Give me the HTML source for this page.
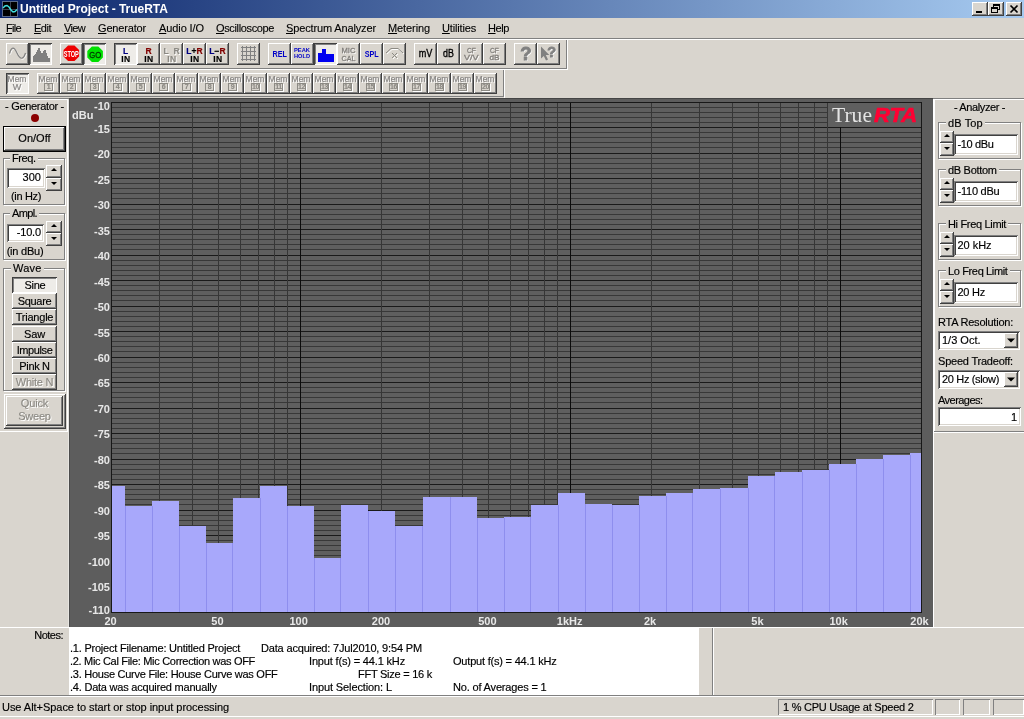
<!DOCTYPE html>
<html><head><meta charset="utf-8"><title>Untitled Project - TrueRTA</title>
<style>
*{box-sizing:border-box;margin:0;padding:0}
html,body{width:1024px;height:719px;overflow:hidden;background:#d9d5ce}
body{position:relative;font-family:"Liberation Sans",sans-serif;font-size:11px;color:#000;line-height:13px;-webkit-text-stroke:0.16px}
.abs{position:absolute}
.t{position:absolute;white-space:nowrap}
#title{position:absolute;left:0;top:0;width:1024px;height:18px;background:linear-gradient(90deg,#0a246a,#a6caf0)}
#title .cap{-webkit-text-stroke:0;position:absolute;left:20px;top:2px;color:#fff;font-weight:bold;font-size:12px;line-height:14px;white-space:nowrap;letter-spacing:0.1px}
.wb{position:absolute;top:2px;width:16px;height:14px;background:#d9d5ce;box-shadow:inset -1px -1px #404040,inset 1px 1px #fff,inset -2px -2px #808080}
#menu{position:absolute;left:0;top:18px;width:1024px;height:20px}
#menu>span{-webkit-text-stroke:0.12px;position:absolute;top:3px;font-size:11px;line-height:14px;white-space:nowrap}
#menu u{text-decoration:underline;text-underline-offset:1px}
.hl{position:absolute;height:1px;left:0;width:1024px}
.tb{position:absolute;width:23px;height:22px;background:#d9d5ce;box-shadow:inset -1px -1px #404040,inset 1px 1px #fff,inset -2px -2px #808080}
.tb.on{background:#eeece8;box-shadow:inset 1px 1px #404040,inset -1px -1px #fff,inset 2px 2px #808080}
.tb svg{position:absolute;left:0;top:0}
.tb .l1,.tb .l2{position:absolute;left:0;width:23px;text-align:center;font-size:8.5px;line-height:8px;font-weight:bold;letter-spacing:0}
.mem{position:absolute;top:73px;width:23px;height:21px;background:#d9d5ce;box-shadow:inset -1px -1px #404040,inset 1px 1px #fff,inset -2px -2px #808080}
.mem i{position:absolute;left:0;top:2px;width:22px;text-align:center;font-style:normal;font-size:8.5px;line-height:8px;color:#848280;text-shadow:1px 1px 0 #fff}
.mem b{position:absolute;left:7px;top:10px;width:9px;height:8px;border:1px solid #8c8a84;font-size:7px;line-height:6px;letter-spacing:-0.5px;text-align:center;color:#8c8a84;font-weight:bold;box-shadow:1px 1px 0 #fff}
.yl{-webkit-text-stroke:0;position:absolute;left:69px;width:41px;text-align:right;font-weight:bold;font-size:11px;line-height:11px;color:#e8e8e8}
.xl{-webkit-text-stroke:0;position:absolute;top:616px;font-weight:bold;font-size:11px;line-height:11px;color:#e8e8e8;white-space:nowrap}
.grp{position:absolute;border:1px solid #808080;box-shadow:1px 1px 0 #fff,inset 1px 1px 0 #fff}
.grp>em{position:absolute;top:-8px;background:#d9d5ce;font-style:normal;padding:0 2px;white-space:nowrap;line-height:13px}
.edit{position:absolute;background:#fff;box-shadow:inset 1px 1px #808080,inset -1px -1px #fff,inset 2px 2px #404040,inset -2px -2px #d9d5ce;white-space:nowrap}
.btn{position:absolute;background:#d9d5ce;box-shadow:inset -1px -1px #404040,inset 1px 1px #fff,inset -2px -2px #808080;text-align:center;white-space:nowrap}
.btn.on{background:#eeece8;box-shadow:inset 1px 1px #404040,inset -1px -1px #fff,inset 2px 2px #808080}
.dis{color:#8c8a84;text-shadow:1px 1px 0 #fff}
.spin{position:absolute;width:15px;background:#d9d5ce}
.spin s{position:absolute;left:0;right:0;background:#d9d5ce;box-shadow:inset -1px -1px #404040,inset 1px 1px #fff,inset -2px -2px #808080}
.spin s:after{content:"";position:absolute;left:50%;margin-left:-3.5px;border:3px solid transparent}
.spin s.u:after{top:0px;border-bottom:3px solid #000;border-top:0 solid transparent;top:3px}
.spin s.d:after{border-top:3px solid #000;border-bottom:0 solid transparent;top:4px}
.sp{position:absolute;background:#d9d5ce;box-shadow:inset 1px 1px #808080,inset -1px -1px #fff}
#w{position:absolute;left:0;top:0;width:1024px;height:719px;will-change:transform}
</style></head><body><div id="w">
<div id="title">
<svg class="abs" style="left:2px;top:1px" width="16" height="16" viewBox="0 0 16 16" shape-rendering="crispEdges"><rect x="0" y="0" width="16" height="16" fill="#5a6a8a"/><rect x="1" y="1" width="14" height="14" fill="#000"/><path d="M8.5 1V15M1 8.5H15" stroke="#3a4252" stroke-width="1" fill="none"/><path d="M1 7 L3 5 L5 4.5 L7 6 L9 9 L11 11 L13 10.5 L15 8.5" stroke="#3fe0e0" stroke-width="1.4" fill="none" shape-rendering="auto"/></svg>
<div class="cap"><span style="letter-spacing:-0.02px">Untitled Project - TrueRTA</span></div>
<div class="wb" style="left:972px"><svg width="16" height="14"><rect x="4" y="9" width="6" height="2" fill="#000"/></svg></div>
<div class="wb" style="left:988px"><svg width="16" height="14" shape-rendering="crispEdges"><rect x="5.5" y="2.5" width="6" height="5" fill="none" stroke="#000"/><rect x="5" y="2" width="7" height="2" fill="#000"/><rect x="3.5" y="5.5" width="6" height="5" fill="#d9d5ce" stroke="#000"/><rect x="3" y="5" width="7" height="2" fill="#000"/></svg></div>
<div class="wb" style="left:1006px"><svg width="16" height="14"><path d="M4.5 3.5 L11.5 10.5 M11.5 3.5 L4.5 10.5" stroke="#000" stroke-width="1.7"/></svg></div>
</div>
<div id="menu">
<span style="left:6px"><span style="letter-spacing:-0.68px"><u>F</u>ile</span></span>
<span style="left:34px"><span style="letter-spacing:-0.49px"><u>E</u>dit</span></span>
<span style="left:64px"><span style="letter-spacing:-0.66px"><u>V</u>iew</span></span>
<span style="left:98px"><span style="letter-spacing:-0.17px"><u>G</u>enerator</span></span>
<span style="left:159px"><span style="letter-spacing:-0.10px"><u>A</u>udio I/O</span></span>
<span style="left:216px"><span style="letter-spacing:-0.36px"><u>O</u>scilloscope</span></span>
<span style="left:286px"><span style="letter-spacing:-0.14px"><u>S</u>pectrum Analyzer</span></span>
<span style="left:388px"><span style="letter-spacing:-0.10px"><u>M</u>etering</span></span>
<span style="left:442px"><span style="letter-spacing:-0.16px"><u>U</u>tilities</span></span>
<span style="left:488px"><span style="letter-spacing:-0.41px"><u>H</u>elp</span></span>
</div>
<div class="hl" style="top:38px;background:#808080"></div><div class="hl" style="top:39px;background:#fff"></div>
<div class="abs" style="left:0;top:40px;width:567px;height:29px;box-shadow:inset -1px -1px #808080"></div><div class="abs" style="left:567px;top:40px;width:1px;height:30px;background:#fff"></div>
<div class="abs" style="left:0;top:69px;width:567px;height:1px;background:#fff"></div>
<div class="abs" style="left:0;top:70px;width:504px;height:27px;box-shadow:inset -1px -1px #808080"></div><div class="abs" style="left:504px;top:70px;width:1px;height:28px;background:#fff"></div>
<div class="abs" style="left:0;top:98px;width:1024px;height:1px;background:#808080"></div><div class="abs" style="left:0;top:99px;width:68px;height:1px;background:#fff"></div><div class="abs" style="left:933px;top:99px;width:91px;height:1px;background:#fff"></div>
<div class="tb" style="left:6px;top:43px"><svg width="23" height="22"><path d="M3.5 10.5 C5.5 3.5 8 3.5 11 10 S17 17.5 19.5 10" fill="none" stroke="#fff" stroke-width="1" transform="translate(1,1)"/><path d="M3.5 10.5 C5.5 3.5 8 3.5 11 10 S17 17.5 19.5 10" fill="none" stroke="#808080" stroke-width="1.2"/></svg></div>
<div class="tb on" style="left:29px;top:43px"><svg width="23" height="22" shape-rendering="crispEdges"><path d="M4 19 V13 H5 V12 H6 V11 H7 V9 H8 V7 H9 V5 H10 V5 H11 V8 H12 V10 H13 V10 H14 V8 H15 V7 H16 V7 H17 V10 H18 V13 H19 V15 H20 V15 H21 V19 Z" fill="#808080"/></svg></div>
<div class="tb" style="left:60px;top:43px"><svg width="23" height="22"><polygon points="8.1,2.5 14.5,2.5 19.1,7.1 19.1,13.5 14.5,18.1 8.1,18.1 3.5,13.5 3.5,7.1" fill="#ee0000"/><text x="3.8" y="13.6" font-family="Liberation Sans" font-size="9" font-weight="bold" fill="#fff" textLength="15" lengthAdjust="spacingAndGlyphs">STOP</text></svg></div>
<div class="tb on" style="left:83px;top:43px"><svg width="23" height="22"><polygon points="8.9,3.4 15.3,3.4 19.9,8.0 19.9,14.4 15.3,19.0 8.9,19.0 4.3,14.4 4.3,8.0" fill="#00e000"/><text x="6.2" y="14.6" font-family="Liberation Sans" font-size="9.5" fill="#003800" stroke="#003800" stroke-width="0.3" textLength="12" lengthAdjust="spacingAndGlyphs">GO</text></svg></div>
<div class="tb on" style="left:114px;top:43px"><div class="l1" style="top:4px;color:#000080">L</div><div class="l2" style="top:12px;color:#000;letter-spacing:0.6px;padding-left:1px">IN</div></div>
<div class="tb" style="left:137px;top:43px"><div class="l1" style="top:4px;color:#800000">R</div><div class="l2" style="top:12px;color:#000;letter-spacing:0.6px;padding-left:1px">IN</div></div>
<div class="tb" style="left:160px;top:43px"><div class="l1" style="top:4px;color:#8c8a84;text-shadow:1px 1px 0 #fff">L&nbsp;&nbsp;R</div><div class="l2" style="top:12px;color:#8c8a84;text-shadow:1px 1px 0 #fff;letter-spacing:0.6px;padding-left:1px">IN</div></div>
<div class="tb" style="left:183px;top:43px"><div class="l1" style="top:4px;color:#000"><span style="color:#000080">L</span><span style="color:#000">+</span><span style="color:#800000">R</span></div><div class="l2" style="top:12px;color:#000;letter-spacing:0.6px;padding-left:1px">IN</div></div>
<div class="tb" style="left:206px;top:43px"><div class="l1" style="top:4px;color:#000"><span style="color:#000080">L</span><span style="color:#000">&minus;</span><span style="color:#800000">R</span></div><div class="l2" style="top:12px;color:#000;letter-spacing:0.6px;padding-left:1px">IN</div></div>
<div class="tb" style="left:237px;top:43px"><svg width="23" height="22" shape-rendering="crispEdges"><path d="M5.5 3V18 M9.5 3V18 M13.5 3V18 M17.5 3V18 M4 4.5H19 M4 8.5H19 M4 12.5H19 M4 16.5H19" stroke="#808080" fill="none"/></svg></div>
<div class="tb" style="left:268px;top:43px"><svg width="23" height="22"><text x="4.5" y="14.2" font-family="Liberation Sans" font-weight="bold" font-size="8.5" fill="#0000c8" textLength="14.5" lengthAdjust="spacingAndGlyphs">REL</text></svg></div>
<div class="tb" style="left:291px;top:43px"><svg width="23" height="22"><text x="3" y="9.3" font-family="Liberation Sans" font-weight="bold" font-size="6.2" fill="#0000c8" textLength="16" lengthAdjust="spacingAndGlyphs">PEAK</text><text x="3" y="15.2" font-family="Liberation Sans" font-weight="bold" font-size="6.2" fill="#0000c8" textLength="16" lengthAdjust="spacingAndGlyphs">HOLD</text></svg></div>
<div class="tb on" style="left:314px;top:43px"><svg width="23" height="22" shape-rendering="crispEdges"><path d="M4 19 V10 H8 V6 H12 V11 H20 V19 Z" fill="#0000f0"/></svg></div>
<div class="tb" style="left:337px;top:43px"><svg width="23" height="22"><g font-family="Liberation Sans" font-size="8"><text x="5.5" y="11" fill="#fff" textLength="14" lengthAdjust="spacingAndGlyphs">MIC</text><text x="5.5" y="19" fill="#fff" textLength="14" lengthAdjust="spacingAndGlyphs">CAL</text><text x="4.5" y="10" fill="#807e7a" stroke="#807e7a" stroke-width="0.3" textLength="14" lengthAdjust="spacingAndGlyphs">MIC</text><text x="4.5" y="18" fill="#807e7a" stroke="#807e7a" stroke-width="0.3" textLength="14" lengthAdjust="spacingAndGlyphs">CAL</text></g></svg></div>
<div class="tb" style="left:360px;top:43px"><svg width="23" height="22"><text x="4.7" y="14.2" font-family="Liberation Sans" font-weight="bold" font-size="8.5" fill="#0000c8" textLength="14" lengthAdjust="spacingAndGlyphs">SPL</text></svg></div>
<div class="tb" style="left:383px;top:43px"><svg width="23" height="22"><path d="M3 10 L8 5.5 H15 L20 10" fill="none" stroke="#fff" transform="translate(1,1)"/><path d="M3 10 L8 5.5 H15 L20 10" fill="none" stroke="#8c8a84"/><path d="M9 10 L14 15 M14 10 L9 15" stroke="#fff" transform="translate(1,1)"/><path d="M9 10 L14 15 M14 10 L9 15" stroke="#8c8a84"/></svg></div>
<div class="tb" style="left:414px;top:43px"><svg width="23" height="22"><text x="4.8" y="13.8" font-family="Liberation Sans" font-size="10.5" fill="#000" stroke="#000" stroke-width="0.35" textLength="13.6" lengthAdjust="spacingAndGlyphs">mV</text></svg></div>
<div class="tb" style="left:437px;top:43px"><svg width="23" height="22"><text x="6" y="13.8" font-family="Liberation Sans" font-size="10.5" fill="#000" stroke="#000" stroke-width="0.35" textLength="10.8" lengthAdjust="spacingAndGlyphs">dB</text></svg></div>
<div class="tb" style="left:460px;top:43px"><svg width="23" height="22"><g font-family="Liberation Sans" font-size="8"><text x="8" y="10.8" fill="#fff" textLength="9" lengthAdjust="spacingAndGlyphs">CF</text><text x="5" y="18" fill="#fff" textLength="14.5" lengthAdjust="spacingAndGlyphs">V/V</text><text x="7" y="9.8" fill="#807e7a" stroke="#807e7a" stroke-width="0.3" textLength="9" lengthAdjust="spacingAndGlyphs">CF</text><text x="4" y="17" fill="#807e7a" stroke="#807e7a" stroke-width="0.3" textLength="14.5" lengthAdjust="spacingAndGlyphs">V/V</text></g></svg></div>
<div class="tb" style="left:483px;top:43px"><svg width="23" height="22"><g font-family="Liberation Sans" font-size="8"><text x="8" y="10.8" fill="#fff" textLength="9" lengthAdjust="spacingAndGlyphs">CF</text><text x="7.5" y="18" fill="#fff" textLength="10" lengthAdjust="spacingAndGlyphs">dB</text><text x="7" y="9.8" fill="#807e7a" stroke="#807e7a" stroke-width="0.3" textLength="9" lengthAdjust="spacingAndGlyphs">CF</text><text x="6.5" y="17" fill="#807e7a" stroke="#807e7a" stroke-width="0.3" textLength="10" lengthAdjust="spacingAndGlyphs">dB</text></g></svg></div>
<div class="tb" style="left:514px;top:43px"><svg width="23" height="22"><text x="7.2" y="18" font-family="Liberation Sans" font-weight="bold" font-size="18.5" fill="#fff">?</text><text x="6.2" y="17" font-family="Liberation Sans" font-weight="bold" font-size="18.5" fill="#808080" stroke="#808080" stroke-width="0.9">?</text></svg></div>
<div class="tb" style="left:537px;top:43px"><svg width="23" height="22"><path d="M4 3.5 V15.5 L6.8 13 L9 17.5 L11 16.5 L8.8 12 H12.3 Z" fill="#808080"/><text x="11.3" y="15.2" font-family="Liberation Sans" font-weight="bold" font-size="14.5" fill="#fff">?</text><text x="10.3" y="14.2" font-family="Liberation Sans" font-weight="bold" font-size="14.5" fill="#808080" stroke="#808080" stroke-width="0.8">?</text></svg></div>
<div class="mem" style="left:6px;background:#eeece8;box-shadow:inset 1px 1px #404040,inset -1px -1px #fff,inset 2px 2px #808080"><i>Mem</i><i style="top:10px;font-size:9px">W</i></div>
<div class="mem" style="left:37px"><i>Mem</i><b>1</b></div>
<div class="mem" style="left:60px"><i>Mem</i><b>2</b></div>
<div class="mem" style="left:83px"><i>Mem</i><b>3</b></div>
<div class="mem" style="left:106px"><i>Mem</i><b>4</b></div>
<div class="mem" style="left:129px"><i>Mem</i><b>5</b></div>
<div class="mem" style="left:152px"><i>Mem</i><b>6</b></div>
<div class="mem" style="left:175px"><i>Mem</i><b>7</b></div>
<div class="mem" style="left:198px"><i>Mem</i><b>8</b></div>
<div class="mem" style="left:221px"><i>Mem</i><b>9</b></div>
<div class="mem" style="left:244px"><i>Mem</i><b>10</b></div>
<div class="mem" style="left:267px"><i>Mem</i><b>11</b></div>
<div class="mem" style="left:290px"><i>Mem</i><b>12</b></div>
<div class="mem" style="left:313px"><i>Mem</i><b>13</b></div>
<div class="mem" style="left:336px"><i>Mem</i><b>14</b></div>
<div class="mem" style="left:359px"><i>Mem</i><b>15</b></div>
<div class="mem" style="left:382px"><i>Mem</i><b>16</b></div>
<div class="mem" style="left:405px"><i>Mem</i><b>17</b></div>
<div class="mem" style="left:428px"><i>Mem</i><b>18</b></div>
<div class="mem" style="left:451px"><i>Mem</i><b>19</b></div>
<div class="mem" style="left:474px"><i>Mem</i><b>20</b></div>
<div class="abs" style="left:67px;top:99px;width:1px;height:333px;background:#fff"></div><div class="abs" style="left:0;top:431px;width:68px;height:1px;background:#fff"></div>
<div class="t" style="left:0;width:69px;text-align:center;top:100px"><span style="letter-spacing:-0.31px">- Generator -</span></div>
<div class="abs" style="left:31px;top:114px;width:8px;height:8px;border-radius:4px;background:#8b0000"></div>
<div class="btn" style="left:3px;top:126px;width:63px;height:26px;border:1px solid #000;line-height:23px;"><span style="letter-spacing:0.03px">On/Off</span></div>
<div class="grp" style="left:3px;top:158px;width:62px;height:47px"><em style="left:6px;top:-7px"><span style="letter-spacing:-0.40px">Freq.</span></em></div>
<div class="edit" style="left:7px;top:168px;width:38px;height:20px;text-align:right;padding:3px 4px 0 0"><span style="letter-spacing:0.05px">300</span></div>
<div class="spin" style="left:46px;top:165px;height:26px;width:16px"><s class="u" style="top:0;height:13px"></s><s class="d" style="top:13px;height:13px"></s></div>
<div class="t" style="left:2px;width:48px;text-align:center;top:189.5px"><span style="letter-spacing:-0.34px">(in Hz)</span></div>
<div class="grp" style="left:3px;top:213px;width:62px;height:47px"><em style="left:6px;top:-7px"><span style="letter-spacing:-0.62px">Ampl.</span></em></div>
<div class="edit" style="left:7px;top:224px;width:37px;height:18px;text-align:right;padding:2px 3px 0 0"><span style="letter-spacing:-0.14px">-10.0</span></div>
<div class="spin" style="left:46px;top:221px;height:25px;width:16px"><s class="u" style="top:0;height:12px"></s><s class="d" style="top:12px;height:13px"></s></div>
<div class="t" style="left:2px;width:46px;text-align:center;top:244.5px"><span style="letter-spacing:-0.23px">(in dBu)</span></div>
<div class="grp" style="left:3px;top:268px;width:62px;height:123px"><em style="left:7px;top:-7px"><span style="letter-spacing:0.26px">Wave</span></em></div>
<div class="btn on" style="left:12px;top:277px;width:45px;height:16px;line-height:17px;padding-left:1px"><span style="letter-spacing:-0.26px">Sine</span></div>
<div class="btn" style="left:12px;top:293px;width:45px;height:16px;line-height:16px"><span style="letter-spacing:-0.29px">Square</span></div>
<div class="btn" style="left:12px;top:309px;width:45px;height:16px;line-height:16px"><span style="letter-spacing:-0.23px">Triangle</span></div>
<div class="btn" style="left:12px;top:326px;width:45px;height:16px;line-height:16px"><span style="letter-spacing:-0.14px">Saw</span></div>
<div class="btn" style="left:12px;top:342px;width:45px;height:16px;line-height:16px"><span style="letter-spacing:-0.40px">Impulse</span></div>
<div class="btn" style="left:12px;top:358px;width:45px;height:16px;line-height:16px"><span style="letter-spacing:-0.32px">Pink N</span></div>
<div class="btn dis" style="left:12px;top:374px;width:45px;height:16px;line-height:16px"><span style="letter-spacing:-0.23px">White N</span></div>
<div class="btn" style="left:4px;top:394px;width:62px;height:35px"></div><div class="btn dis" style="left:6px;top:396px;width:57px;height:30px;padding-top:1px;line-height:13px"><span style="letter-spacing:-0.12px">Quick</span><br><span style="letter-spacing:-0.23px">Sweep</span></div>

<div class="abs" style="left:68px;top:100px;width:1px;height:528px;background:#e6e4e0"></div><svg class="chart" width="864" height="529" viewBox="69 98 864 529" style="position:absolute;left:69px;top:98px" shape-rendering="crispEdges">
<rect x="69" y="98" width="864" height="529" fill="#5d5d5d"/>
<rect x="69" y="98" width="864" height="1" fill="#444444"/><rect x="69" y="98" width="1" height="529" fill="#4c4c4c"/>
<rect x="111" y="102" width="811" height="511" fill="#5f5f5f"/>
<line x1="111" x2="921" y1="102.5" y2="102.5" stroke="#1a1a1a" stroke-width="1"/>
<line x1="111" x2="921" y1="107.5" y2="107.5" stroke="#383838" stroke-width="1"/>
<line x1="111" x2="921" y1="112.5" y2="112.5" stroke="#383838" stroke-width="1"/>
<line x1="111" x2="921" y1="117.5" y2="117.5" stroke="#383838" stroke-width="1"/>
<line x1="111" x2="921" y1="122.5" y2="122.5" stroke="#383838" stroke-width="1"/>
<line x1="111" x2="921" y1="127.5" y2="127.5" stroke="#1a1a1a" stroke-width="1"/>
<line x1="111" x2="921" y1="132.5" y2="132.5" stroke="#383838" stroke-width="1"/>
<line x1="111" x2="921" y1="137.5" y2="137.5" stroke="#383838" stroke-width="1"/>
<line x1="111" x2="921" y1="142.5" y2="142.5" stroke="#383838" stroke-width="1"/>
<line x1="111" x2="921" y1="147.5" y2="147.5" stroke="#383838" stroke-width="1"/>
<line x1="111" x2="921" y1="153.5" y2="153.5" stroke="#1a1a1a" stroke-width="1"/>
<line x1="111" x2="921" y1="158.5" y2="158.5" stroke="#383838" stroke-width="1"/>
<line x1="111" x2="921" y1="163.5" y2="163.5" stroke="#383838" stroke-width="1"/>
<line x1="111" x2="921" y1="168.5" y2="168.5" stroke="#383838" stroke-width="1"/>
<line x1="111" x2="921" y1="173.5" y2="173.5" stroke="#383838" stroke-width="1"/>
<line x1="111" x2="921" y1="178.5" y2="178.5" stroke="#1a1a1a" stroke-width="1"/>
<line x1="111" x2="921" y1="183.5" y2="183.5" stroke="#383838" stroke-width="1"/>
<line x1="111" x2="921" y1="188.5" y2="188.5" stroke="#383838" stroke-width="1"/>
<line x1="111" x2="921" y1="193.5" y2="193.5" stroke="#383838" stroke-width="1"/>
<line x1="111" x2="921" y1="198.5" y2="198.5" stroke="#383838" stroke-width="1"/>
<line x1="111" x2="921" y1="204.5" y2="204.5" stroke="#1a1a1a" stroke-width="1"/>
<line x1="111" x2="921" y1="209.5" y2="209.5" stroke="#383838" stroke-width="1"/>
<line x1="111" x2="921" y1="214.5" y2="214.5" stroke="#383838" stroke-width="1"/>
<line x1="111" x2="921" y1="219.5" y2="219.5" stroke="#383838" stroke-width="1"/>
<line x1="111" x2="921" y1="224.5" y2="224.5" stroke="#383838" stroke-width="1"/>
<line x1="111" x2="921" y1="229.5" y2="229.5" stroke="#1a1a1a" stroke-width="1"/>
<line x1="111" x2="921" y1="234.5" y2="234.5" stroke="#383838" stroke-width="1"/>
<line x1="111" x2="921" y1="239.5" y2="239.5" stroke="#383838" stroke-width="1"/>
<line x1="111" x2="921" y1="244.5" y2="244.5" stroke="#383838" stroke-width="1"/>
<line x1="111" x2="921" y1="249.5" y2="249.5" stroke="#383838" stroke-width="1"/>
<line x1="111" x2="921" y1="255.5" y2="255.5" stroke="#1a1a1a" stroke-width="1"/>
<line x1="111" x2="921" y1="260.5" y2="260.5" stroke="#383838" stroke-width="1"/>
<line x1="111" x2="921" y1="265.5" y2="265.5" stroke="#383838" stroke-width="1"/>
<line x1="111" x2="921" y1="270.5" y2="270.5" stroke="#383838" stroke-width="1"/>
<line x1="111" x2="921" y1="275.5" y2="275.5" stroke="#383838" stroke-width="1"/>
<line x1="111" x2="921" y1="280.5" y2="280.5" stroke="#1a1a1a" stroke-width="1"/>
<line x1="111" x2="921" y1="285.5" y2="285.5" stroke="#383838" stroke-width="1"/>
<line x1="111" x2="921" y1="290.5" y2="290.5" stroke="#383838" stroke-width="1"/>
<line x1="111" x2="921" y1="295.5" y2="295.5" stroke="#383838" stroke-width="1"/>
<line x1="111" x2="921" y1="300.5" y2="300.5" stroke="#383838" stroke-width="1"/>
<line x1="111" x2="921" y1="306.5" y2="306.5" stroke="#1a1a1a" stroke-width="1"/>
<line x1="111" x2="921" y1="311.5" y2="311.5" stroke="#383838" stroke-width="1"/>
<line x1="111" x2="921" y1="316.5" y2="316.5" stroke="#383838" stroke-width="1"/>
<line x1="111" x2="921" y1="321.5" y2="321.5" stroke="#383838" stroke-width="1"/>
<line x1="111" x2="921" y1="326.5" y2="326.5" stroke="#383838" stroke-width="1"/>
<line x1="111" x2="921" y1="331.5" y2="331.5" stroke="#1a1a1a" stroke-width="1"/>
<line x1="111" x2="921" y1="336.5" y2="336.5" stroke="#383838" stroke-width="1"/>
<line x1="111" x2="921" y1="341.5" y2="341.5" stroke="#383838" stroke-width="1"/>
<line x1="111" x2="921" y1="346.5" y2="346.5" stroke="#383838" stroke-width="1"/>
<line x1="111" x2="921" y1="351.5" y2="351.5" stroke="#383838" stroke-width="1"/>
<line x1="111" x2="921" y1="357.5" y2="357.5" stroke="#1a1a1a" stroke-width="1"/>
<line x1="111" x2="921" y1="362.5" y2="362.5" stroke="#383838" stroke-width="1"/>
<line x1="111" x2="921" y1="367.5" y2="367.5" stroke="#383838" stroke-width="1"/>
<line x1="111" x2="921" y1="372.5" y2="372.5" stroke="#383838" stroke-width="1"/>
<line x1="111" x2="921" y1="377.5" y2="377.5" stroke="#383838" stroke-width="1"/>
<line x1="111" x2="921" y1="382.5" y2="382.5" stroke="#1a1a1a" stroke-width="1"/>
<line x1="111" x2="921" y1="387.5" y2="387.5" stroke="#383838" stroke-width="1"/>
<line x1="111" x2="921" y1="392.5" y2="392.5" stroke="#383838" stroke-width="1"/>
<line x1="111" x2="921" y1="397.5" y2="397.5" stroke="#383838" stroke-width="1"/>
<line x1="111" x2="921" y1="402.5" y2="402.5" stroke="#383838" stroke-width="1"/>
<line x1="111" x2="921" y1="408.5" y2="408.5" stroke="#1a1a1a" stroke-width="1"/>
<line x1="111" x2="921" y1="413.5" y2="413.5" stroke="#383838" stroke-width="1"/>
<line x1="111" x2="921" y1="418.5" y2="418.5" stroke="#383838" stroke-width="1"/>
<line x1="111" x2="921" y1="423.5" y2="423.5" stroke="#383838" stroke-width="1"/>
<line x1="111" x2="921" y1="428.5" y2="428.5" stroke="#383838" stroke-width="1"/>
<line x1="111" x2="921" y1="433.5" y2="433.5" stroke="#1a1a1a" stroke-width="1"/>
<line x1="111" x2="921" y1="438.5" y2="438.5" stroke="#383838" stroke-width="1"/>
<line x1="111" x2="921" y1="443.5" y2="443.5" stroke="#383838" stroke-width="1"/>
<line x1="111" x2="921" y1="448.5" y2="448.5" stroke="#383838" stroke-width="1"/>
<line x1="111" x2="921" y1="453.5" y2="453.5" stroke="#383838" stroke-width="1"/>
<line x1="111" x2="921" y1="459.5" y2="459.5" stroke="#1a1a1a" stroke-width="1"/>
<line x1="111" x2="921" y1="464.5" y2="464.5" stroke="#383838" stroke-width="1"/>
<line x1="111" x2="921" y1="469.5" y2="469.5" stroke="#383838" stroke-width="1"/>
<line x1="111" x2="921" y1="474.5" y2="474.5" stroke="#383838" stroke-width="1"/>
<line x1="111" x2="921" y1="479.5" y2="479.5" stroke="#383838" stroke-width="1"/>
<line x1="111" x2="921" y1="484.5" y2="484.5" stroke="#1a1a1a" stroke-width="1"/>
<line x1="111" x2="921" y1="489.5" y2="489.5" stroke="#383838" stroke-width="1"/>
<line x1="111" x2="921" y1="494.5" y2="494.5" stroke="#383838" stroke-width="1"/>
<line x1="111" x2="921" y1="499.5" y2="499.5" stroke="#383838" stroke-width="1"/>
<line x1="111" x2="921" y1="504.5" y2="504.5" stroke="#383838" stroke-width="1"/>
<line x1="111" x2="921" y1="510.5" y2="510.5" stroke="#1a1a1a" stroke-width="1"/>
<line x1="111" x2="921" y1="515.5" y2="515.5" stroke="#383838" stroke-width="1"/>
<line x1="111" x2="921" y1="520.5" y2="520.5" stroke="#383838" stroke-width="1"/>
<line x1="111" x2="921" y1="525.5" y2="525.5" stroke="#383838" stroke-width="1"/>
<line x1="111" x2="921" y1="530.5" y2="530.5" stroke="#383838" stroke-width="1"/>
<line x1="111" x2="921" y1="535.5" y2="535.5" stroke="#1a1a1a" stroke-width="1"/>
<line x1="111" x2="921" y1="540.5" y2="540.5" stroke="#383838" stroke-width="1"/>
<line x1="111" x2="921" y1="545.5" y2="545.5" stroke="#383838" stroke-width="1"/>
<line x1="111" x2="921" y1="550.5" y2="550.5" stroke="#383838" stroke-width="1"/>
<line x1="111" x2="921" y1="555.5" y2="555.5" stroke="#383838" stroke-width="1"/>
<line x1="111" x2="921" y1="561.5" y2="561.5" stroke="#1a1a1a" stroke-width="1"/>
<line x1="111" x2="921" y1="566.5" y2="566.5" stroke="#383838" stroke-width="1"/>
<line x1="111" x2="921" y1="571.5" y2="571.5" stroke="#383838" stroke-width="1"/>
<line x1="111" x2="921" y1="576.5" y2="576.5" stroke="#383838" stroke-width="1"/>
<line x1="111" x2="921" y1="581.5" y2="581.5" stroke="#383838" stroke-width="1"/>
<line x1="111" x2="921" y1="586.5" y2="586.5" stroke="#1a1a1a" stroke-width="1"/>
<line x1="111" x2="921" y1="591.5" y2="591.5" stroke="#383838" stroke-width="1"/>
<line x1="111" x2="921" y1="596.5" y2="596.5" stroke="#383838" stroke-width="1"/>
<line x1="111" x2="921" y1="601.5" y2="601.5" stroke="#383838" stroke-width="1"/>
<line x1="111" x2="921" y1="606.5" y2="606.5" stroke="#383838" stroke-width="1"/>
<line x1="111" x2="921" y1="612.5" y2="612.5" stroke="#1a1a1a" stroke-width="1"/>
<line x1="111.5" x2="111.5" y1="102" y2="612" stroke="#363636" stroke-width="1"/>
<line x1="159.5" x2="159.5" y1="102" y2="612" stroke="#363636" stroke-width="1"/>
<line x1="192.5" x2="192.5" y1="102" y2="612" stroke="#363636" stroke-width="1"/>
<line x1="218.5" x2="218.5" y1="102" y2="612" stroke="#363636" stroke-width="1"/>
<line x1="240.5" x2="240.5" y1="102" y2="612" stroke="#363636" stroke-width="1"/>
<line x1="258.5" x2="258.5" y1="102" y2="612" stroke="#363636" stroke-width="1"/>
<line x1="274.5" x2="274.5" y1="102" y2="612" stroke="#363636" stroke-width="1"/>
<line x1="287.5" x2="287.5" y1="102" y2="612" stroke="#363636" stroke-width="1"/>
<line x1="300.5" x2="300.5" y1="102" y2="612" stroke="#0c0c0c" stroke-width="1"/>
<line x1="381.5" x2="381.5" y1="102" y2="612" stroke="#363636" stroke-width="1"/>
<line x1="429.5" x2="429.5" y1="102" y2="612" stroke="#363636" stroke-width="1"/>
<line x1="462.5" x2="462.5" y1="102" y2="612" stroke="#363636" stroke-width="1"/>
<line x1="488.5" x2="488.5" y1="102" y2="612" stroke="#363636" stroke-width="1"/>
<line x1="510.5" x2="510.5" y1="102" y2="612" stroke="#363636" stroke-width="1"/>
<line x1="528.5" x2="528.5" y1="102" y2="612" stroke="#363636" stroke-width="1"/>
<line x1="544.5" x2="544.5" y1="102" y2="612" stroke="#363636" stroke-width="1"/>
<line x1="557.5" x2="557.5" y1="102" y2="612" stroke="#363636" stroke-width="1"/>
<line x1="570.5" x2="570.5" y1="102" y2="612" stroke="#0c0c0c" stroke-width="1"/>
<line x1="651.5" x2="651.5" y1="102" y2="612" stroke="#363636" stroke-width="1"/>
<line x1="699.5" x2="699.5" y1="102" y2="612" stroke="#363636" stroke-width="1"/>
<line x1="732.5" x2="732.5" y1="102" y2="612" stroke="#363636" stroke-width="1"/>
<line x1="758.5" x2="758.5" y1="102" y2="612" stroke="#363636" stroke-width="1"/>
<line x1="780.5" x2="780.5" y1="102" y2="612" stroke="#363636" stroke-width="1"/>
<line x1="798.5" x2="798.5" y1="102" y2="612" stroke="#363636" stroke-width="1"/>
<line x1="814.5" x2="814.5" y1="102" y2="612" stroke="#363636" stroke-width="1"/>
<line x1="827.5" x2="827.5" y1="102" y2="612" stroke="#363636" stroke-width="1"/>
<line x1="840.5" x2="840.5" y1="102" y2="612" stroke="#0c0c0c" stroke-width="1"/>
<line x1="921.5" x2="921.5" y1="102" y2="612" stroke="#363636" stroke-width="1"/>
<rect x="111.5" y="102.5" width="810" height="510" fill="none" stroke="#181818" stroke-width="1"/>
<rect x="112" y="486" width="13" height="126" fill="#a8a8fb"/>
<rect x="125" y="506" width="27" height="106" fill="#a8a8fb"/>
<rect x="125" y="506" width="1" height="106" fill="#8e8eee"/>
<rect x="152" y="501" width="27" height="111" fill="#a8a8fb"/>
<rect x="152" y="506" width="1" height="106" fill="#8e8eee"/>
<rect x="179" y="525.5" width="27" height="86.5" fill="#a8a8fb"/>
<rect x="179" y="525.5" width="1" height="86.5" fill="#8e8eee"/>
<rect x="206" y="542.5" width="26.5" height="69.5" fill="#a8a8fb"/>
<rect x="206" y="542.5" width="1" height="69.5" fill="#8e8eee"/>
<rect x="232.5" y="498" width="27.0" height="114" fill="#a8a8fb"/>
<rect x="232" y="542.5" width="1" height="69.5" fill="#8e8eee"/>
<rect x="259.5" y="485.5" width="27.5" height="126.5" fill="#a8a8fb"/>
<rect x="260" y="498" width="1" height="114" fill="#8e8eee"/>
<rect x="287" y="506" width="27" height="106" fill="#a8a8fb"/>
<rect x="287" y="506" width="1" height="106" fill="#8e8eee"/>
<rect x="314" y="557.5" width="26.5" height="54.5" fill="#a8a8fb"/>
<rect x="314" y="557.5" width="1" height="54.5" fill="#8e8eee"/>
<rect x="340.5" y="504.5" width="27.5" height="107.5" fill="#a8a8fb"/>
<rect x="340" y="557.5" width="1" height="54.5" fill="#8e8eee"/>
<rect x="368" y="510.5" width="27" height="101.5" fill="#a8a8fb"/>
<rect x="368" y="510.5" width="1" height="101.5" fill="#8e8eee"/>
<rect x="395" y="525.5" width="27.5" height="86.5" fill="#a8a8fb"/>
<rect x="395" y="525.5" width="1" height="86.5" fill="#8e8eee"/>
<rect x="422.5" y="496.8" width="27.0" height="115.19999999999999" fill="#a8a8fb"/>
<rect x="422" y="525.5" width="1" height="86.5" fill="#8e8eee"/>
<rect x="449.5" y="497" width="27.5" height="115" fill="#a8a8fb"/>
<rect x="450" y="497" width="1" height="115" fill="#8e8eee"/>
<rect x="477" y="517.5" width="26.5" height="94.5" fill="#a8a8fb"/>
<rect x="477" y="517.5" width="1" height="94.5" fill="#8e8eee"/>
<rect x="503.5" y="516.8" width="27.0" height="95.20000000000005" fill="#a8a8fb"/>
<rect x="504" y="517.5" width="1" height="94.5" fill="#8e8eee"/>
<rect x="530.5" y="504.5" width="27.5" height="107.5" fill="#a8a8fb"/>
<rect x="530" y="516.8" width="1" height="95.20000000000005" fill="#8e8eee"/>
<rect x="558" y="492.8" width="27" height="119.19999999999999" fill="#a8a8fb"/>
<rect x="558" y="504.5" width="1" height="107.5" fill="#8e8eee"/>
<rect x="585" y="503.8" width="27" height="108.19999999999999" fill="#a8a8fb"/>
<rect x="585" y="503.8" width="1" height="108.19999999999999" fill="#8e8eee"/>
<rect x="612" y="504.5" width="27" height="107.5" fill="#a8a8fb"/>
<rect x="612" y="504.5" width="1" height="107.5" fill="#8e8eee"/>
<rect x="639" y="495.5" width="27" height="116.5" fill="#a8a8fb"/>
<rect x="639" y="504.5" width="1" height="107.5" fill="#8e8eee"/>
<rect x="666" y="492.5" width="26.5" height="119.5" fill="#a8a8fb"/>
<rect x="666" y="495.5" width="1" height="116.5" fill="#8e8eee"/>
<rect x="692.5" y="488.8" width="27.5" height="123.19999999999999" fill="#a8a8fb"/>
<rect x="692" y="492.5" width="1" height="119.5" fill="#8e8eee"/>
<rect x="720" y="487.5" width="27.5" height="124.5" fill="#a8a8fb"/>
<rect x="720" y="488.8" width="1" height="123.19999999999999" fill="#8e8eee"/>
<rect x="747.5" y="475.5" width="27.0" height="136.5" fill="#a8a8fb"/>
<rect x="748" y="487.5" width="1" height="124.5" fill="#8e8eee"/>
<rect x="774.5" y="471.8" width="27.0" height="140.2" fill="#a8a8fb"/>
<rect x="774" y="475.5" width="1" height="136.5" fill="#8e8eee"/>
<rect x="801.5" y="469.5" width="27.5" height="142.5" fill="#a8a8fb"/>
<rect x="802" y="471.8" width="1" height="140.2" fill="#8e8eee"/>
<rect x="829" y="464" width="27" height="148" fill="#a8a8fb"/>
<rect x="829" y="469.5" width="1" height="142.5" fill="#8e8eee"/>
<rect x="856" y="459.2" width="27" height="152.8" fill="#a8a8fb"/>
<rect x="856" y="464" width="1" height="148" fill="#8e8eee"/>
<rect x="883" y="454.5" width="27" height="157.5" fill="#a8a8fb"/>
<rect x="883" y="459.2" width="1" height="152.8" fill="#8e8eee"/>
<rect x="910" y="453" width="11" height="159" fill="#a8a8fb"/>
<rect x="910" y="454.5" width="1" height="157.5" fill="#8e8eee"/>
</svg>
<div class="yl" style="top:100.5px">-10</div>
<div class="yl" style="top:124.0px">-15</div>
<div class="yl" style="top:149.4px">-20</div>
<div class="yl" style="top:174.8px">-25</div>
<div class="yl" style="top:200.3px">-30</div>
<div class="yl" style="top:225.8px">-35</div>
<div class="yl" style="top:251.2px">-40</div>
<div class="yl" style="top:276.6px">-45</div>
<div class="yl" style="top:302.1px">-50</div>
<div class="yl" style="top:327.5px">-55</div>
<div class="yl" style="top:353.0px">-60</div>
<div class="yl" style="top:378.4px">-65</div>
<div class="yl" style="top:403.9px">-70</div>
<div class="yl" style="top:429.3px">-75</div>
<div class="yl" style="top:454.8px">-80</div>
<div class="yl" style="top:480.2px">-85</div>
<div class="yl" style="top:505.7px">-90</div>
<div class="yl" style="top:531.1px">-95</div>
<div class="yl" style="top:556.6px">-100</div>
<div class="yl" style="top:582.0px">-105</div>
<div class="yl" style="top:604.5px">-110</div>
<div class="xl" style="left:104.5px">20</div>
<div class="xl" style="left:197.4px;width:40px;text-align:center">50</div>
<div class="xl" style="left:278.7px;width:40px;text-align:center">100</div>
<div class="xl" style="left:361.0px;width:40px;text-align:center">200</div>
<div class="xl" style="left:467.4px;width:40px;text-align:center">500</div>
<div class="xl" style="left:549.7px;width:40px;text-align:center">1kHz</div>
<div class="xl" style="left:630.0px;width:40px;text-align:center">2k</div>
<div class="xl" style="left:737.4px;width:40px;text-align:center">5k</div>
<div class="xl" style="left:818.7px;width:40px;text-align:center">10k</div>
<div class="xl" style="left:904.7px;width:24px;text-align:right">20k</div>
<div class="t" style="left:72px;top:110px;-webkit-text-stroke:0;font-weight:bold;color:#e8e8e8;font-size:11px;line-height:11px">dBu</div>
<div class="abs" style="left:828px;top:103px;width:93px;height:24px;background:#5f5f5f"></div><svg class="abs" style="left:828px;top:100px" width="96" height="30"><text x="4" y="22" font-family="Liberation Serif" font-size="21.5" fill="#e4e4e4" textLength="40" lengthAdjust="spacingAndGlyphs">True</text><text x="46" y="22" font-family="Liberation Sans" font-weight="bold" font-style="italic" font-size="20.5" fill="#ff0033" stroke="#ff0033" stroke-width="0.7" textLength="43" lengthAdjust="spacingAndGlyphs">RTA</text></svg>
<div class="abs" style="left:933px;top:99px;width:1px;height:528px;background:#fff"></div>

<div class="abs" style="left:934px;top:99px;width:1px;height:333px;background:#fff"></div>
<div class="abs" style="left:934px;top:431px;width:90px;height:1px;background:#808080"></div><div class="abs" style="left:934px;top:432px;width:90px;height:1px;background:#fff"></div>
<div class="t" style="left:935.5px;width:88px;text-align:center;top:100.5px"><span style="letter-spacing:-0.39px">- Analyzer -</span></div>
<div class="grp" style="left:938px;top:122px;width:83px;height:37px"><em style="left:7px;top:-6px"><span style="letter-spacing:0.11px">dB Top</span></em></div>
<div class="spin" style="left:940px;top:131px;height:25px;width:14px"><s class="u" style="top:0;height:12px"></s><s class="d" style="top:12px;height:13px"></s></div>
<div class="edit" style="left:954px;top:134px;width:64px;height:21px;padding:4px 0 0 3.5px"><span style="letter-spacing:-0.36px">-10 dBu</span></div><div class="grp" style="left:938px;top:169px;width:83px;height:37px"><em style="left:7px;top:-6px"><span style="letter-spacing:-0.30px">dB Bottom</span></em></div>
<div class="spin" style="left:940px;top:178px;height:25px;width:14px"><s class="u" style="top:0;height:12px"></s><s class="d" style="top:12px;height:13px"></s></div>
<div class="edit" style="left:954px;top:181px;width:64px;height:21px;padding:4px 0 0 3.5px"><span style="letter-spacing:-0.23px">-110 dBu</span></div><div class="grp" style="left:938px;top:223px;width:83px;height:37px"><em style="left:7px;top:-6px"><span style="letter-spacing:-0.33px">Hi Freq Limit</span></em></div>
<div class="spin" style="left:940px;top:232px;height:25px;width:14px"><s class="u" style="top:0;height:12px"></s><s class="d" style="top:12px;height:13px"></s></div>
<div class="edit" style="left:954px;top:235px;width:64px;height:21px;padding:4px 0 0 3.5px"><span style="letter-spacing:-0.04px">20 kHz</span></div><div class="grp" style="left:938px;top:270px;width:83px;height:37px"><em style="left:7px;top:-6px"><span style="letter-spacing:-0.36px">Lo Freq Limit</span></em></div>
<div class="spin" style="left:940px;top:279px;height:25px;width:14px"><s class="u" style="top:0;height:12px"></s><s class="d" style="top:12px;height:13px"></s></div>
<div class="edit" style="left:954px;top:282px;width:64px;height:21px;padding:4px 0 0 3.5px"><span style="letter-spacing:-0.25px">20 Hz</span></div>
<div class="t" style="left:938px;top:316px"><span style="letter-spacing:-0.23px">RTA Resolution:</span></div>
<div class="edit" style="left:938px;top:331px;width:82px;height:19px;padding:3px 0 0 4px"><span style="letter-spacing:-0.00px">1/3 Oct.</span></div>
<div class="btn" style="left:1004px;top:333px;width:14px;height:15px"><svg width="14" height="15" style="position:absolute;left:0;top:0"><path d="M3 5.5 H11 L7 9.5 Z" fill="#000"/></svg></div>
<div class="t" style="left:938px;top:355px"><span style="letter-spacing:-0.21px">Speed Tradeoff:</span></div>
<div class="edit" style="left:938px;top:370px;width:82px;height:19px;padding:3px 0 0 4px"><span style="letter-spacing:-0.34px">20 Hz (slow)</span></div>
<div class="btn" style="left:1004px;top:372px;width:14px;height:15px"><svg width="14" height="15" style="position:absolute;left:0;top:0"><path d="M3 5.5 H11 L7 9.5 Z" fill="#000"/></svg></div>
<div class="t" style="left:938px;top:394px"><span style="letter-spacing:-0.54px">Averages:</span></div>
<div class="edit" style="left:938px;top:407px;width:83px;height:19px;text-align:right;padding:4px 4px 0 0">1</div>

<div class="abs" style="left:0;top:627px;width:1024px;height:1px;background:#fff"></div>
<div class="abs" style="left:69px;top:628px;width:630px;height:67px;background:#fff"></div>
<div class="abs" style="left:712px;top:628px;width:1px;height:67px;background:#808080"></div><div class="abs" style="left:713px;top:628px;width:1px;height:67px;background:#fff"></div>
<div class="t" style="left:0;width:63px;text-align:right;top:629px"><span style="letter-spacing:-0.51px">Notes:</span></div>
<div class="t" style="left:70px;top:642px"><span style="letter-spacing:-0.22px">.1. Project Filename: Untitled Project</span></div>
<div class="t" style="left:261px;top:642px"><span style="letter-spacing:-0.17px">Data acquired: 7Jul2010, 9:54 PM</span></div>
<div class="t" style="left:70px;top:655px"><span style="letter-spacing:-0.31px">.2. Mic Cal File: Mic Correction was OFF</span></div>
<div class="t" style="left:309px;top:655px"><span style="letter-spacing:-0.16px">Input f(s) = 44.1 kHz</span></div>
<div class="t" style="left:453px;top:655px"><span style="letter-spacing:-0.20px">Output f(s) = 44.1 kHz</span></div>
<div class="t" style="left:70px;top:668px"><span style="letter-spacing:-0.26px">.3. House Curve File: House Curve was OFF</span></div>
<div class="t" style="left:358px;top:668px"><span style="letter-spacing:-0.25px">FFT Size = 16 k</span></div>
<div class="t" style="left:70px;top:681px"><span style="letter-spacing:-0.22px">.4. Data was acquired manually</span></div>
<div class="t" style="left:309px;top:681px"><span style="letter-spacing:-0.11px">Input Selection: L</span></div>
<div class="t" style="left:453px;top:681px"><span style="letter-spacing:-0.17px">No. of Averages = 1</span></div>
<div class="abs" style="left:0;top:695px;width:1024px;height:1px;background:#808080"></div><div class="abs" style="left:0;top:696px;width:1024px;height:1px;background:#fff"></div>
<div class="t" style="left:2px;top:700px;line-height:14px"><span style="letter-spacing:-0.04px">Use Alt+Space to start or stop input processing</span></div>
<div class="sp" style="left:778px;top:699px;width:155px;height:16px"></div>
<div class="t" style="left:783px;top:700px;line-height:14px"><span style="letter-spacing:-0.24px">1 % CPU Usage at Speed 2</span></div>
<div class="sp" style="left:935px;top:699px;width:25px;height:16px"></div>
<div class="sp" style="left:963px;top:699px;width:27px;height:16px"></div>
<div class="sp" style="left:993px;top:699px;width:31px;height:16px"></div>
<div class="abs" style="left:0;top:716px;width:1024px;height:1px;background:#fff"></div>

</div></body></html>
